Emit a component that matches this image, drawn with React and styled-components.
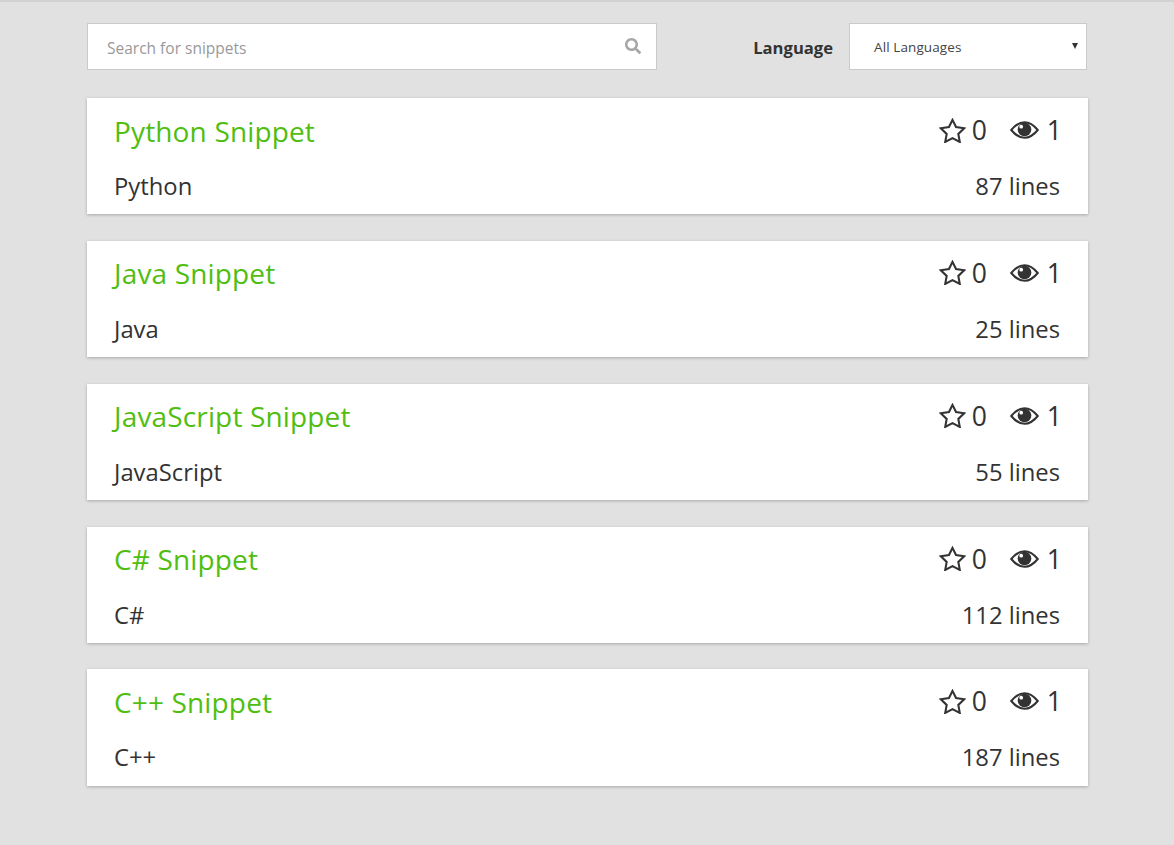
import React from "react";
import styled, { createGlobalStyle } from "styled-components";
import { FaSearch } from "react-icons/fa";

const Global = createGlobalStyle`
  html, body { margin: 0; padding: 0; }
  body {
    background: #e1e1e1;
    font-family: "Open Sans", "Noto Sans", sans-serif;
    color: #333;
    min-height: 845px;
  }
`;
const Page = styled.div`
  border-top: 2px solid #d2d2d2;
  padding: 21px 86px 0 87px;
  height: 843px;
  box-sizing: border-box;
  overflow: hidden;
`;
const Toolbar = styled.div`
  display: flex;
  align-items: center;
  justify-content: space-between;
  height: 47px;
  padding-right: 1px;
  margin-bottom: 28.2px;
`;
const SearchBox = styled.div`
  width: 570px;
  height: 47px;
  box-sizing: border-box;
  background: #fff;
  border: 1px solid #cacaca;
  display: flex;
  align-items: center;
  justify-content: space-between;
  padding: 2px 15px 0 19px;
`;
const SearchInput = styled.input`
  border: 0;
  outline: 0;
  flex: 1;
  padding: 0;
  font: 15.5px "Open Sans", sans-serif;
  color: #333;
  &::placeholder { color: #999; opacity: 1; }
`;
const SearchIcon = styled(FaSearch)`
  width: 16px;
  height: 16px;
  color: #a6a6a6;
  margin-top: -4px;
`;
const Filter = styled.div`
  display: flex;
  align-items: center;
  gap: 16px;
`;
const FilterLabel = styled.label`
  font-size: 16.6px;
  font-weight: 700;
  color: #333;
  position: relative;
  top: 1px;
`;
const SelectBox = styled.div`
  position: relative;
  width: 238px;
  height: 47px;
  box-sizing: border-box;
  background: #fff;
  border: 1px solid #cacaca;
  display: flex;
  align-items: center;
  padding-left: 24px;
  font-size: 13.5px;
  letter-spacing: 0.1px;
  color: #444;
`;
const Caret = styled.span`
  position: absolute;
  right: 8px;
  top: 19px;
  width: 0;
  height: 0;
  border-left: 3px solid transparent;
  border-right: 3px solid transparent;
  border-top: 6px solid #333;
`;
const List = styled.div`
  display: flex;
  flex-direction: column;
  gap: 26.6px;
`;
const Card = styled.article`
  background: #fff;
  height: 116.2px;
  box-sizing: border-box;
  padding: 0 28px 0 27px;
  box-shadow: 0 1px 3px rgba(0, 0, 0, 0.25);
  display: flex;
  flex-direction: column;
`;
const Row = styled.div`
  display: flex;
  justify-content: space-between;
  align-items: center;
`;
const TopRow = styled(Row)`
  height: 65px;
`;
const Title = styled.a`
  font-size: 28px;
  letter-spacing: 0.15px;
  color: #50be10;
  text-decoration: none;
`;
const Stats = styled.div`
  display: flex;
  align-items: center;
  font-size: 26.5px;
  color: #333;
  margin: -1px -2px 0 0;
`;
const StarSvg = styled.svg`
  width: 27px;
  height: 25px;
  margin-right: 6px;
  fill: none;
  stroke: #333;
  stroke-width: 2;
`;
const EyeSvg = styled.svg`
  width: 29px;
  height: 18px;
  margin: 0 8px 0 23px;
`;
const Meta = styled(Row)`
  font-size: 23.8px;
  color: #333;
  height: 36px;
  margin-top: 5px;
`;

const StarIcon = () => (
  <StarSvg viewBox="0 0 26 24">
    <polygon points="13,1.8 16.4,8.7 24.3,9.8 18.6,15.3 20,23 13,19.3 6,23 7.4,15.3 1.7,9.8 9.6,8.7" />
  </StarSvg>
);
const EyeIcon = () => (
  <EyeSvg viewBox="0 0 28 17">
    <path
      d="M1.2 8.5C6 2.6 10 1 14 1s8 1.600 12.800 7.500C22 14.400 18 16 14 16S6 14.400 1.200 8.500Z"
      fill="none"
      stroke="#333"
      strokeWidth="2"
    />
    <circle cx="14" cy="8" r="6.600" fill="#333" />
    <circle cx="10.800" cy="5.300" r="1.800" fill="#fff" />
  </EyeSvg>
);

const items = [
  ["Python", 87],
  ["Java", 25],
  ["JavaScript", 55],
  ["C#", 112],
  ["C++", 187],
];

export default function App() {
  return (
    <Page>
      <Global />
      <Toolbar>
        <SearchBox>
          <SearchInput placeholder="Search for snippets" />
          <SearchIcon />
        </SearchBox>
        <Filter>
          <FilterLabel>Language</FilterLabel>
          <SelectBox>
            All Languages
            <Caret />
          </SelectBox>
        </Filter>
      </Toolbar>
      <List>
        {items.map(([name, lines]) => (
          <Card key={name}>
            <TopRow>
              <Title>{name} Snippet</Title>
              <Stats>
                <StarIcon />0<EyeIcon />1
              </Stats>
            </TopRow>
            <Meta>
              <span>{name}</span>
              <span>{lines} lines</span>
            </Meta>
          </Card>
        ))}
      </List>
    </Page>
  );
}
